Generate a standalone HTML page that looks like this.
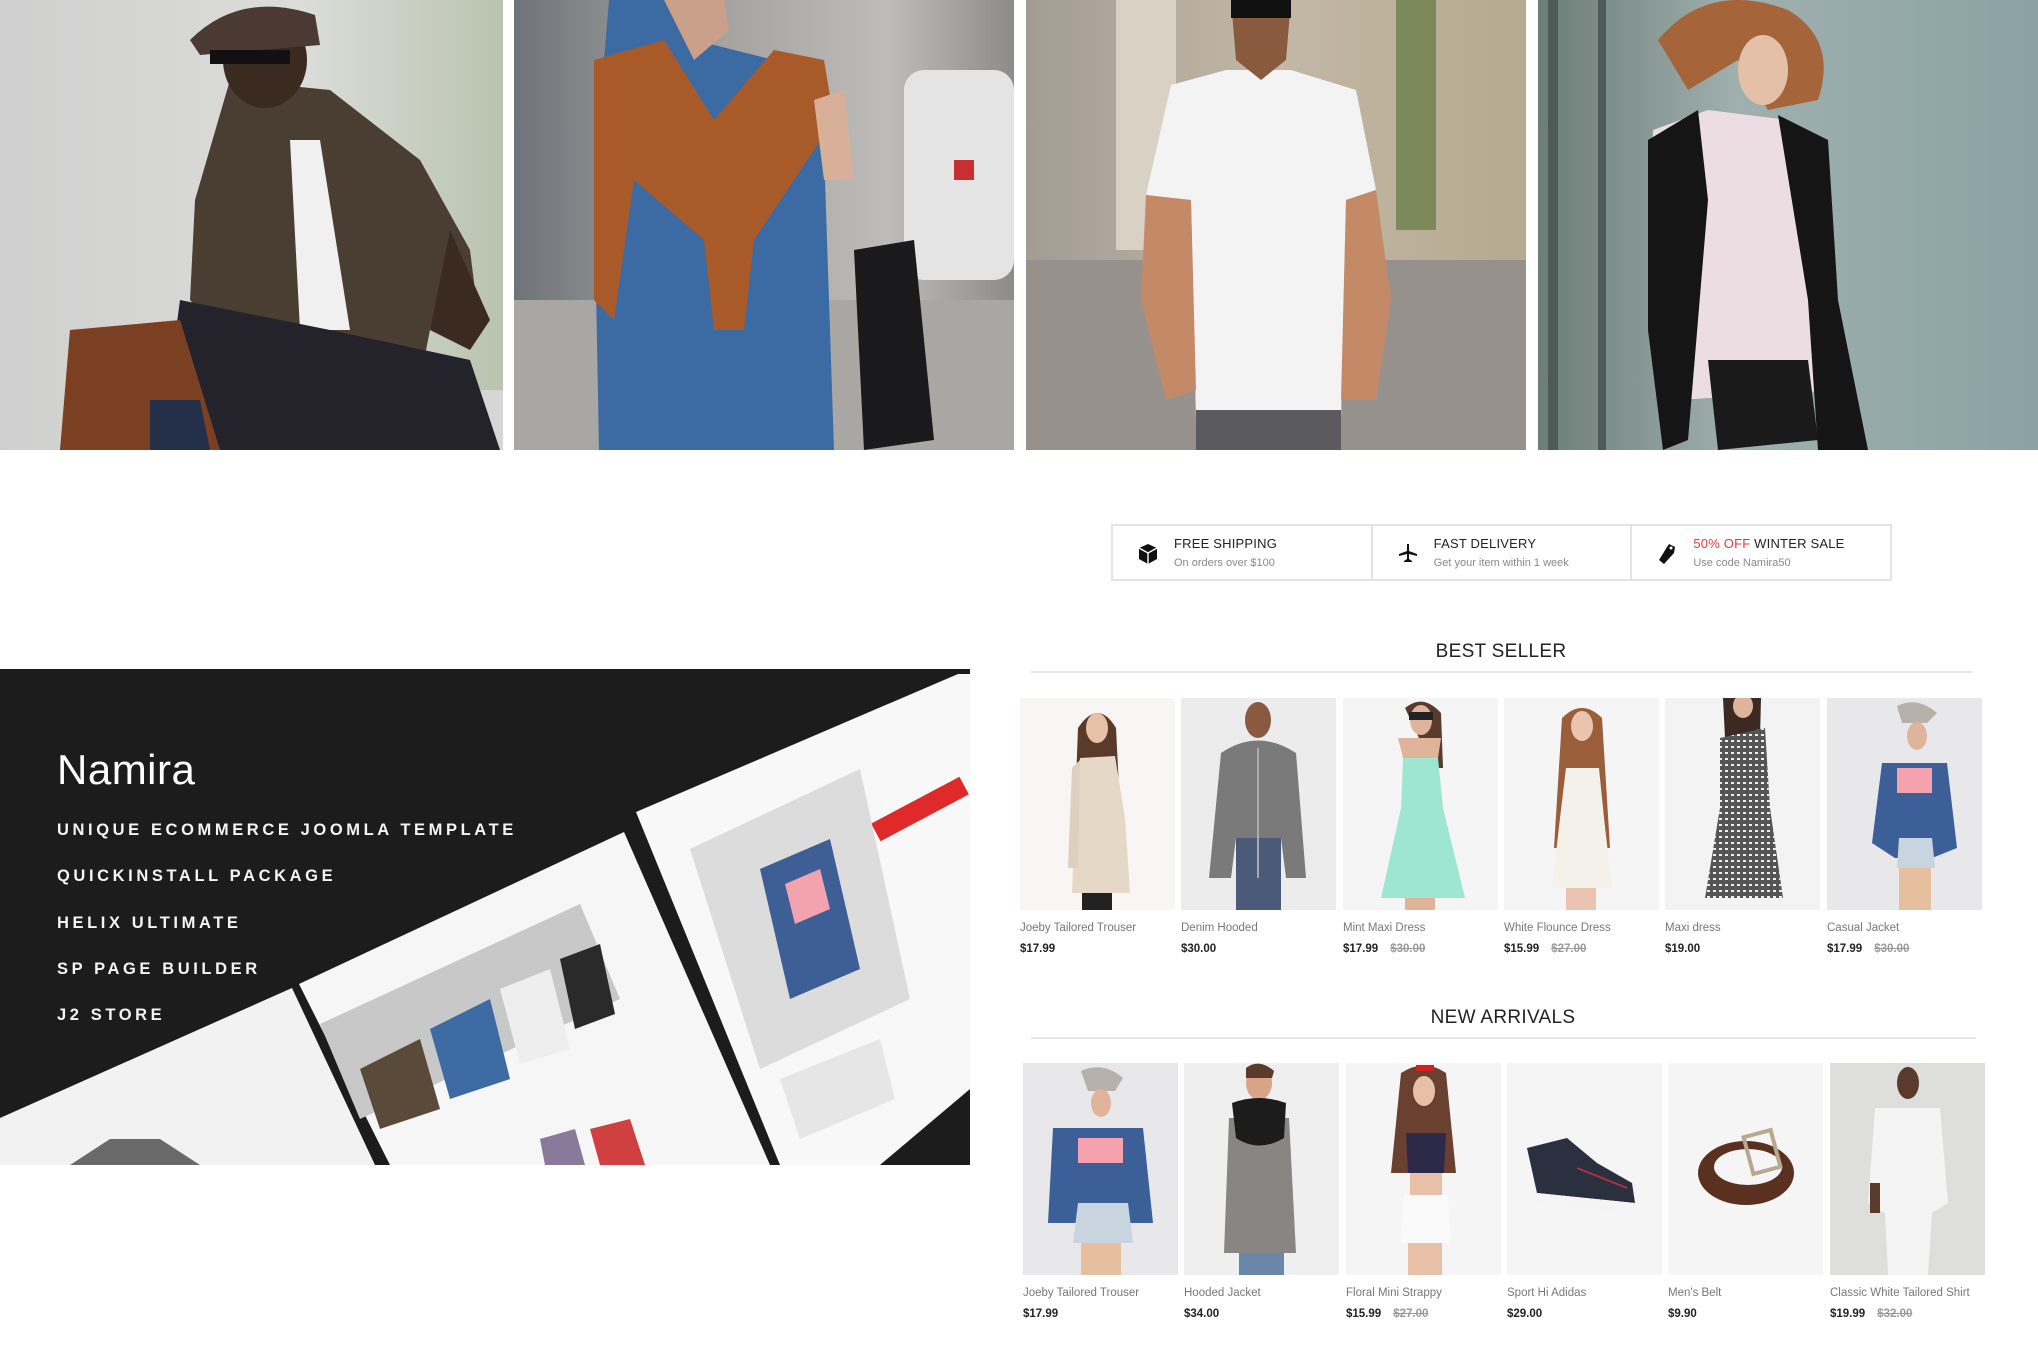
<!DOCTYPE html>
<html><head><meta charset="utf-8">
<style>
*{margin:0;padding:0;box-sizing:border-box}
body{width:2038px;height:1359px;background:#fff;position:relative;overflow:hidden;font-family:"Liberation Sans",sans-serif}
.abs{position:absolute}
.ph{position:absolute;top:0;height:450px;overflow:hidden}
.feat{position:absolute;left:1111px;top:524px;width:781px;height:57px;border:2px solid #e3e3e3;display:flex}
.feat>div{flex:1;position:relative;border-right:2px solid #e3e3e3}
.feat>div:last-child{border-right:none}
.ft{position:absolute;left:61px;top:10px;font-size:13px;color:#222;letter-spacing:.2px}
.fs{position:absolute;left:61px;top:31px;font-size:11px;color:#888}
.fi{position:absolute;left:25px;top:17px}
.h2{position:absolute;font-size:19px;color:#222;letter-spacing:.3px;width:300px;text-align:center}
.line{position:absolute;height:2px;background:#e8e8e8}
.prod{position:absolute;width:155px}
.prod svg{display:block;width:155px;height:212px}
.pn{font-size:11.5px;color:#777;margin-top:12px;white-space:nowrap}
.pp{font-size:11.5px;color:#222;font-weight:bold;margin-top:9px}
.pp s{color:#999;margin-left:12px}
.ban{position:absolute;left:0;top:669px;width:970px;height:496px;background:#1c1c1c;overflow:hidden}
.ban .t1{position:absolute;left:57px;top:77px;font-size:42px;color:#fff;letter-spacing:.5px}
.ban .t{position:absolute;left:57px;font-size:16.5px;color:#f4f4f4;letter-spacing:3.6px;font-weight:bold}
</style></head><body>

<div class="ph" style="left:0;width:503px">
<svg width="503" height="450" viewBox="0 0 503 450">
<defs><linearGradient id="g1" x1="0" x2="1"><stop offset="0" stop-color="#cfcfcf"/><stop offset=".6" stop-color="#dcdcda"/><stop offset="1" stop-color="#b9c4ae"/></linearGradient></defs>
<rect width="503" height="450" fill="url(#g1)"/>
<rect x="250" y="390" width="253" height="60" fill="#d6d6d6"/>
<path d="M230 80 L330 90 L420 160 L470 250 L480 330 L430 330 L420 380 L330 400 L260 380 L190 300 L195 200 Z" fill="#4a3e33"/>
<path d="M290 140 L320 140 L350 330 L300 330 Z" fill="#f0f0f0"/>
<path d="M180 300 L330 330 L470 360 L500 450 L160 450 Z" fill="#24232b"/>
<ellipse cx="265" cy="60" rx="42" ry="48" fill="#3b2a20"/>
<path d="M190 40 Q240 -10 315 15 L320 45 L200 55 Z" fill="#4b3a34"/>
<rect x="210" y="50" width="80" height="14" fill="#111"/>
<path d="M450 230 L490 320 L470 350 L430 330 Z" fill="#3b2a20"/>
<path d="M70 330 L180 320 L220 450 L60 450 Z" fill="#7b3f22"/>
<path d="M150 400 L200 400 L210 450 L150 450 Z" fill="#24304a"/>
</svg></div>

<div class="ph" style="left:514px;width:500px">
<svg width="500" height="450" viewBox="0 0 500 450">
<defs><linearGradient id="g2" x1="0" x2="1"><stop offset="0" stop-color="#6f737b"/><stop offset=".3" stop-color="#9b9a98"/><stop offset=".75" stop-color="#bdbcb9"/><stop offset="1" stop-color="#8e8c8a"/></linearGradient></defs>
<rect width="500" height="450" fill="url(#g2)"/>
<rect x="0" y="300" width="500" height="150" fill="#a9a7a3"/>
<rect x="390" y="70" width="110" height="210" rx="20" fill="#e4e4e4"/>
<rect x="440" y="160" width="20" height="20" fill="#c83030"/>
<path d="M95 0 L160 0 L180 40 L260 60 L310 150 L320 450 L85 450 L80 180 Z" fill="#3c6aa3"/>
<path d="M150 0 L210 0 L215 30 L180 60 Z" fill="#caa08a"/>
<path d="M80 60 L150 40 L200 120 L260 50 L310 60 L320 120 L240 240 L230 330 L200 330 L190 240 L120 180 L100 320 L80 300 Z" fill="#a85b28"/>
<path d="M340 250 L400 240 L420 440 L350 450 Z" fill="#1a1a1c"/>
<path d="M300 100 L330 90 L340 180 L310 180 Z" fill="#d8b09a"/>
</svg></div>

<div class="ph" style="left:1026px;width:500px">
<svg width="500" height="450" viewBox="0 0 500 450">
<defs><linearGradient id="g3" x1="0" x2="1"><stop offset="0" stop-color="#a29c93"/><stop offset=".5" stop-color="#c3b8a6"/><stop offset="1" stop-color="#b5a98f"/></linearGradient></defs>
<rect width="500" height="450" fill="url(#g3)"/>
<rect x="0" y="260" width="500" height="190" fill="#96918c"/>
<rect x="90" y="0" width="60" height="250" fill="#d9d2c4"/>
<rect x="370" y="0" width="40" height="230" fill="#7a8a5a"/>
<path d="M145 85 L200 70 L265 70 L330 90 L350 190 L320 200 L315 420 L170 420 L165 200 L120 195 Z" fill="#f3f3f3"/>
<path d="M120 195 L165 200 L170 390 L140 400 L115 300 Z" fill="#c48a68"/>
<path d="M320 200 L350 190 L365 300 L350 400 L315 400 Z" fill="#c48a68"/>
<rect x="170" y="410" width="145" height="40" fill="#5b5b5f"/>
<path d="M205 0 L265 0 L260 60 L235 80 L210 60 Z" fill="#8a5a3e"/>
<rect x="205" y="0" width="60" height="18" fill="#111"/>
</svg></div>

<div class="ph" style="left:1538px;width:500px">
<svg width="500" height="450" viewBox="0 0 500 450">
<defs><linearGradient id="g4" x1="0" x2="1"><stop offset="0" stop-color="#6c7d77"/><stop offset=".4" stop-color="#9fb0ae"/><stop offset="1" stop-color="#8aa2a4"/></linearGradient></defs>
<rect width="500" height="450" fill="url(#g4)"/>
<rect x="10" y="0" width="10" height="450" fill="#4e5a55"/><rect x="60" y="0" width="8" height="450" fill="#4e5a55"/>
<path d="M115 130 L170 110 L250 120 L290 190 L300 390 L140 400 L110 300 Z" fill="#ebdde2"/>
<path d="M110 140 L160 110 L170 200 L150 440 L125 450 L110 330 Z" fill="#151515"/>
<path d="M240 115 L290 140 L300 300 L330 450 L280 450 L270 300 Z" fill="#151515"/>
<path d="M170 360 L270 360 L280 440 L180 450 Z" fill="#1a1a1a"/>
<path d="M120 40 Q170 -20 250 10 Q300 40 280 100 L230 110 L200 60 L150 90 Z" fill="#a5643a"/>
<ellipse cx="225" cy="70" rx="25" ry="35" fill="#e4c0a8"/>
</svg></div>

<div class="feat">
<div><svg class="fi" width="20" height="22" viewBox="0 0 20 22"><path d="M10 1 L19 5 L19 16 L10 21 L1 16 L1 5 Z" fill="#111"/><path d="M1 5 L10 10 L19 5 M10 10 L10 21" stroke="#fff" stroke-width="1.4" fill="none"/></svg>
<div class="ft">FREE SHIPPING</div><div class="fs">On orders over $100</div></div>
<div><svg class="fi" width="20" height="20" viewBox="0 0 20 20"><path d="M9 1 L11 1 L11 8 L19 11 L19 13 L11 11 L11 16 L14 18 L14 19 L6 19 L6 18 L9 16 L9 11 L1 13 L1 11 L9 8 Z" fill="#111"/></svg>
<div class="ft">FAST DELIVERY</div><div class="fs">Get your item within 1 week</div></div>
<div><svg class="fi" width="20" height="22" viewBox="0 0 20 22"><path d="M12 1 L18 4 L17 10 L7 21 L2 17 L10 4 Z" fill="#111"/><circle cx="14" cy="5" r="1.5" fill="#fff"/></svg>
<div class="ft"><span style="color:#e03a3a">50% OFF</span> WINTER SALE</div><div class="fs">Use code Namira50</div></div>
</div>

<div class="ban">
<svg class="abs" style="left:0;top:0" width="970" height="496" viewBox="0 0 970 496">
<polygon points="0,449 292,319 375,496 0,496" fill="#f2f2f2"/>
<polygon points="299,315 624,163 770,496 390,496" fill="#f6f6f6"/>
<polygon points="636,143 958,5 970,5 970,420 880,496 780,496" fill="#f8f8f8"/>
<rect x="870" y="130" width="100" height="20" fill="#e02a2a" transform="rotate(-28 920 140)"/>
<polygon points="690,180 860,100 910,330 760,400" fill="#dcdcdc"/>
<path d="M760 200 L830 170 L860 300 L790 330 Z" fill="#3e5f95"/>
<path d="M785 215 L820 200 L830 240 L795 255 Z" fill="#f2a3ae"/>
<polygon points="780,410 880,370 895,430 800,470" fill="#e6e6e6"/>
<polygon points="320,355 580,235 620,330 360,450" fill="#c8c8c8"/>
<path d="M360 400 L420 370 L440 440 L380 460 Z" fill="#5a4a3a"/>
<path d="M430 360 L490 330 L510 410 L450 430 Z" fill="#3d6aa3"/>
<path d="M500 320 L550 300 L570 380 L520 395 Z" fill="#eeeeee"/>
<path d="M560 290 L600 275 L615 345 L575 360 Z" fill="#2a2a2a"/>
<path d="M590 460 L630 450 L645 496 L600 496 Z" fill="#d04040"/>
<path d="M540 470 L575 460 L585 496 L545 496 Z" fill="#8a7a9a"/>
<path d="M70 496 L110 470 L160 470 L200 496 Z" fill="#6a6a6a"/>
</svg>
<div class="t1">Namira</div>
<div class="t" style="top:152px">UNIQUE ECOMMERCE JOOMLA TEMPLATE</div>
<div class="t" style="top:198px">QUICKINSTALL PACKAGE</div>
<div class="t" style="top:245px">HELIX ULTIMATE</div>
<div class="t" style="top:291px">SP PAGE BUILDER</div>
<div class="t" style="top:337px">J2 STORE</div>
</div>

<div class="h2" style="left:1351px;top:641px">BEST SELLER</div>
<div class="line" style="left:1031px;top:671px;width:941px"></div>

<div class="prod" style="left:1020px;top:698px">
<svg viewBox="0 0 155 212"><rect width="155" height="212" fill="#f8f5f4"/><path d="M58 30 Q78 0 96 30 L100 110 L55 110 Z" fill="#5a3a28"/><ellipse cx="77" cy="30" rx="11" ry="15" fill="#e8c0a8"/><path d="M60 60 L95 58 L105 120 L110 195 L52 195 L55 120 Z" fill="#e6d8c6"/><path d="M52 70 L60 62 L58 170 L48 170 Z" fill="#ddd0be"/><rect x="62" y="195" width="30" height="17" fill="#222"/></svg>
<div class="pn">Joeby Tailored Trouser</div><div class="pp">$17.99</div></div>

<div class="prod" style="left:1181px;top:698px">
<svg viewBox="0 0 155 212"><rect width="155" height="212" fill="#ececec"/><ellipse cx="77" cy="22" rx="13" ry="18" fill="#8a5a40"/><path d="M40 55 Q77 30 115 55 L125 180 L105 180 L100 140 L55 140 L50 180 L28 180 Z" fill="#7a7a7a"/><path d="M55 140 L100 140 L100 212 L55 212 Z" fill="#4a5a78"/><rect x="76" y="50" width="2" height="130" fill="#aaa"/></svg>
<div class="pn">Denim Hooded</div><div class="pp">$30.00</div></div>

<div class="prod" style="left:1343px;top:698px">
<svg viewBox="0 0 155 212"><rect width="155" height="212" fill="#f5f5f5"/><path d="M62 10 Q80 -5 98 15 L100 70 L90 70 Z" fill="#5a3a2a"/><ellipse cx="78" cy="22" rx="11" ry="15" fill="#e0b49a"/><rect x="66" y="14" width="24" height="8" fill="#222"/><path d="M55 40 L98 40 L95 60 L60 60 Z" fill="#e0b49a"/><path d="M60 60 L95 60 L100 110 L122 200 L38 200 L58 110 Z" fill="#9fe6d0"/><rect x="62" y="200" width="30" height="12" fill="#e0b49a"/></svg>
<div class="pn">Mint Maxi Dress</div><div class="pp">$17.99<s>$30.00</s></div></div>

<div class="prod" style="left:1504px;top:698px">
<svg viewBox="0 0 155 212"><rect width="155" height="212" fill="#f5f5f5"/><path d="M58 20 Q78 0 98 20 L106 150 L50 150 Z" fill="#9a5e3a"/><ellipse cx="78" cy="28" rx="11" ry="15" fill="#eac4ae"/><path d="M62 70 L95 70 L100 120 L108 190 L48 190 L56 120 Z" fill="#f4f0ea"/><rect x="62" y="190" width="30" height="22" fill="#eac4ae"/></svg>
<div class="pn">White Flounce Dress</div><div class="pp">$15.99<s>$27.00</s></div></div>

<div class="prod" style="left:1665px;top:698px">
<svg viewBox="0 0 155 212"><defs><pattern id="dots" width="6" height="6" patternUnits="userSpaceOnUse"><rect width="3" height="2" fill="#eee"/></pattern></defs><rect width="155" height="212" fill="#f3f3f3"/><path d="M58 0 L96 0 L95 40 L60 40 Z" fill="#3a2a22"/><ellipse cx="78" cy="8" rx="10" ry="12" fill="#e0b49a"/><path d="M55 40 L100 30 L105 110 L118 200 L40 200 L55 110 Z" fill="#555"/><path d="M55 40 L100 30 L105 110 L118 200 L40 200 L55 110 Z" fill="url(#dots)"/></svg>
<div class="pn">Maxi dress</div><div class="pp">$19.00</div></div>

<div class="prod" style="left:1827px;top:698px">
<svg viewBox="0 0 155 212"><rect width="155" height="212" fill="#e8e8ea"/><path d="M70 8 Q90 -2 110 15 L100 25 L75 25 Z" fill="#b8b0aa"/><ellipse cx="90" cy="38" rx="10" ry="14" fill="#e0b49a"/><path d="M55 65 L120 65 L130 150 L105 160 L68 160 L45 145 Z" fill="#3c5f97"/><path d="M70 70 L105 70 L105 95 L70 95 Z" fill="#f5a2ae"/><path d="M72 140 L105 140 L108 170 L70 170 Z" fill="#c8d4e0"/><rect x="72" y="170" width="32" height="42" fill="#e6c09e"/></svg>
<div class="pn">Casual Jacket</div><div class="pp">$17.99<s>$30.00</s></div></div>

<div class="h2" style="left:1353px;top:1007px">NEW ARRIVALS</div>
<div class="line" style="left:1031px;top:1037px;width:945px"></div>

<div class="prod" style="left:1023px;top:1063px">
<svg viewBox="0 0 155 212"><rect width="155" height="212" fill="#e8e8ea"/><path d="M58 8 Q80 -2 100 15 L92 28 L65 28 Z" fill="#b8b0aa"/><ellipse cx="78" cy="40" rx="10" ry="14" fill="#e0b49a"/><path d="M30 65 L120 65 L130 160 L25 160 Z" fill="#3c5f97"/><path d="M55 75 L100 75 L100 100 L55 100 Z" fill="#f5a2ae"/><path d="M55 140 L105 140 L110 180 L50 180 Z" fill="#c8d4e0"/><rect x="58" y="180" width="40" height="32" fill="#e6c09e"/></svg>
<div class="pn">Joeby Tailored Trouser</div><div class="pp">$17.99</div></div>

<div class="prod" style="left:1184px;top:1063px">
<svg viewBox="0 0 155 212"><rect width="155" height="212" fill="#efefef"/><ellipse cx="75" cy="20" rx="13" ry="17" fill="#d8a488"/><path d="M62 5 Q75 -5 90 8 L88 15 L62 15 Z" fill="#5a3a2a"/><path d="M45 55 L105 55 L112 190 L40 190 Z" fill="#888682"/><path d="M48 40 Q75 30 102 40 L100 75 Q75 90 52 75 Z" fill="#1c1c1c"/><rect x="55" y="190" width="45" height="22" fill="#6a86a8"/></svg>
<div class="pn">Hooded Jacket</div><div class="pp">$34.00</div></div>

<div class="prod" style="left:1346px;top:1063px">
<svg viewBox="0 0 155 212"><rect width="155" height="212" fill="#f5f5f5"/><path d="M55 10 Q78 -5 100 10 L110 110 L45 110 Z" fill="#6a4030"/><rect x="70" y="2" width="18" height="6" fill="#d02020"/><ellipse cx="78" cy="28" rx="11" ry="15" fill="#e8c0a8"/><path d="M60 70 L100 70 L98 110 L62 110 Z" fill="#2c2a48"/><rect x="64" y="110" width="32" height="22" fill="#e8c0a8"/><path d="M58 132 L102 132 L105 180 L55 180 Z" fill="#fafafa"/><rect x="62" y="180" width="34" height="32" fill="#e8c0a8"/></svg>
<div class="pn">Floral Mini Strappy</div><div class="pp">$15.99<s>$27.00</s></div></div>

<div class="prod" style="left:1507px;top:1063px">
<svg viewBox="0 0 155 212"><rect width="155" height="212" fill="#f5f5f5"/><path d="M20 85 L60 75 L90 100 L125 120 L128 140 L30 130 Z" fill="#2a3040"/><path d="M30 130 L128 140 L126 150 L32 140 Z" fill="#f4f4f4"/><path d="M70 105 L120 125" stroke="#b03040" stroke-width="2"/></svg>
<div class="pn">Sport Hi Adidas</div><div class="pp">$29.00</div></div>

<div class="prod" style="left:1668px;top:1063px">
<svg viewBox="0 0 155 212"><rect width="155" height="212" fill="#f5f5f5"/><ellipse cx="78" cy="110" rx="48" ry="32" fill="#5a3020"/><ellipse cx="80" cy="104" rx="34" ry="18" fill="#f5f5f5"/><rect x="80" y="70" width="28" height="38" fill="none" stroke="#b8a890" stroke-width="4" transform="rotate(-15 94 89)"/></svg>
<div class="pn">Men's Belt</div><div class="pp">$9.90</div></div>

<div class="prod" style="left:1830px;top:1063px">
<svg viewBox="0 0 155 212"><rect width="155" height="212" fill="#dededc"/><ellipse cx="78" cy="20" rx="11" ry="16" fill="#5a3a2a"/><path d="M45 45 L110 45 L118 140 L102 150 L98 212 L58 212 L55 150 L38 140 Z" fill="#f4f4f4"/><rect x="40" y="120" width="10" height="30" fill="#5a3a2a"/></svg>
<div class="pn">Classic White Tailored Shirt</div><div class="pp">$19.99<s>$32.00</s></div></div>

</body></html>
